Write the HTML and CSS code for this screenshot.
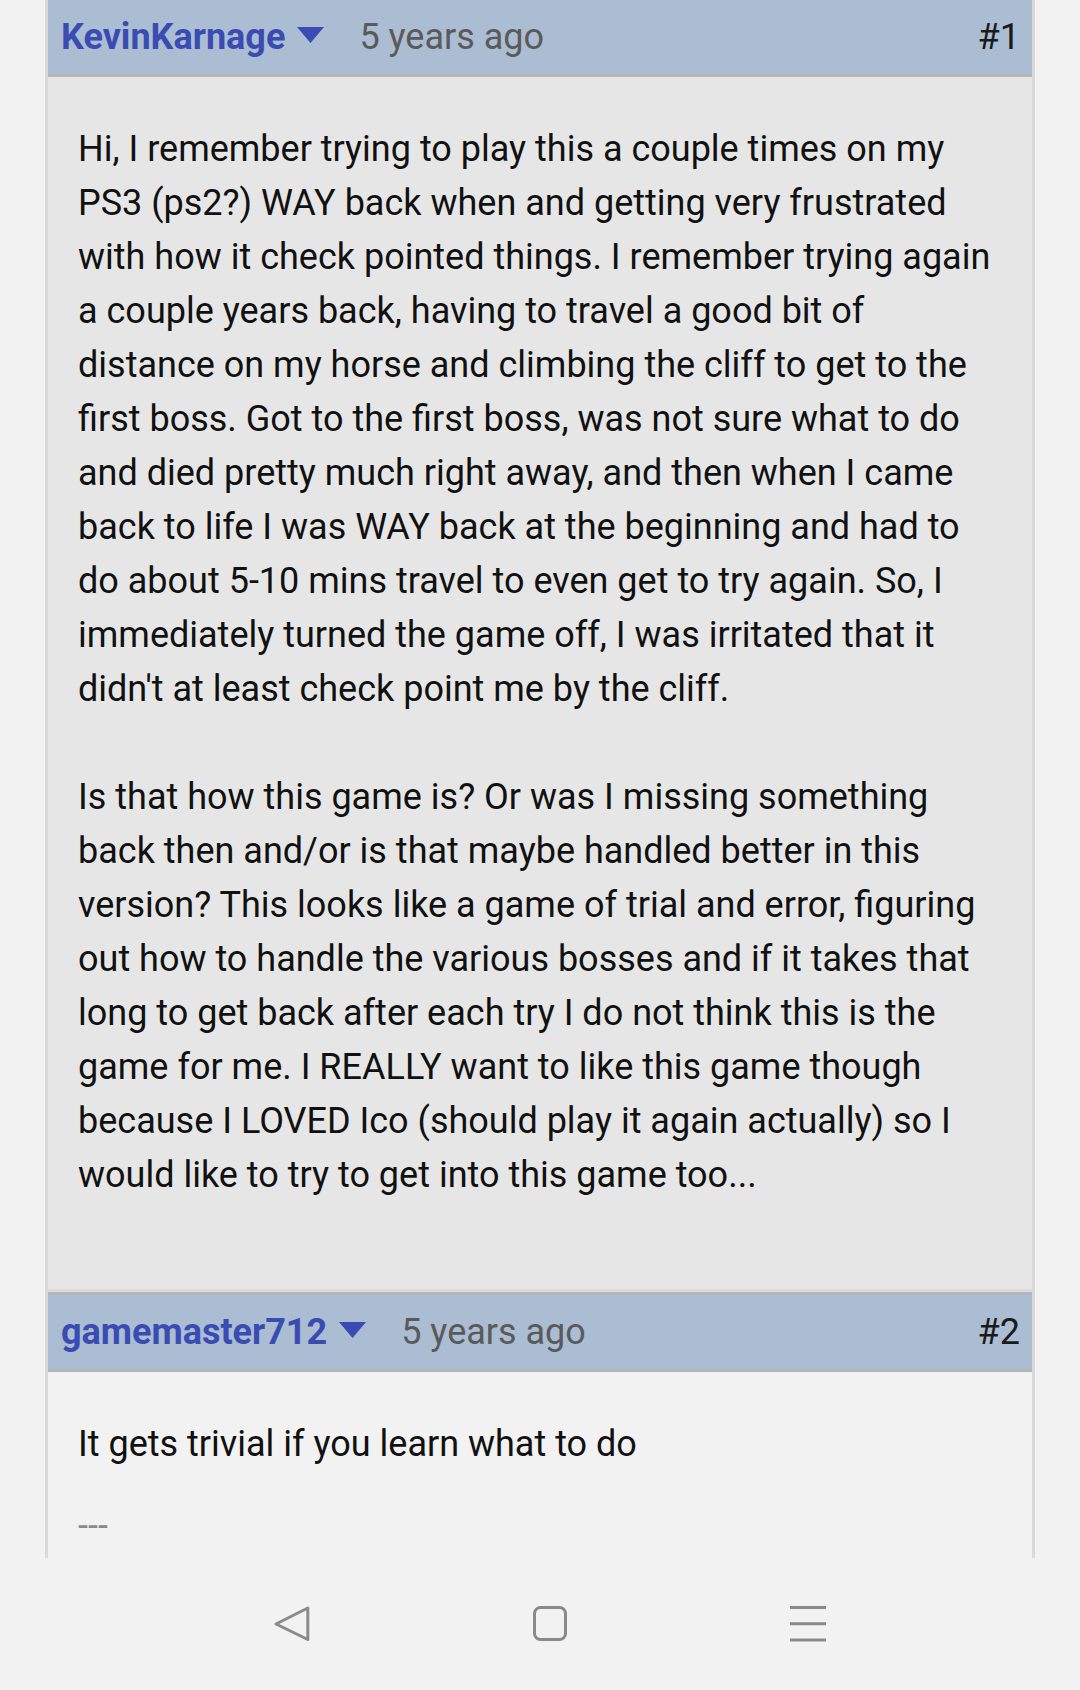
FILE: index.html
```html
<!DOCTYPE html>
<html lang="en">
<head>
    <meta charset="UTF-8">
    <meta name="viewport" content="width=device-width, initial-scale=1.0">
    <title>Comments</title>
    <link rel="stylesheet" href="styles.css">
</head>
<body>

    <div class="thread">
        <div class="post">
            <div class="post-head">
                <a class="author" href="#">KevinKarnage</a>
                <svg class="caret" width="27" height="16" viewBox="0 0 27 16"><polygon points="0,0 27,0 13.5,16" /></svg>
                <span class="age">5 years ago</span>
                <span class="num">#1</span>
            </div>
            <div class="post-body">
                <p>Hi, I remember trying to play this a couple times on my PS3 (ps2?) WAY back when and getting very frustrated with how it check pointed things. I remember trying again a couple years back, having to travel a good bit of distance on my horse and climbing the cliff to get to the first boss. Got to the first boss, was not sure what to do and died pretty much right away, and then when I came back to life I was WAY back at the beginning and had to do about 5-10 mins travel to even get to try again. So, I immediately turned the game off, I was irritated that it didn't at least check point me by the cliff.</p>
                <p>Is that how this game is? Or was I missing something back then and/or is that maybe handled better in this version? This looks like a game of trial and error, figuring out how to handle the various bosses and if it takes that long to get back after each try I do not think this is the game for me. I REALLY want to like this game though because I LOVED Ico (should play it again actually) so I would like to try to get into this game too...</p>
            </div>
        </div>

        <div class="post post-light">
            <div class="post-head">
                <a class="author" href="#">gamemaster712</a>
                <svg class="caret" width="27" height="16" viewBox="0 0 27 16"><polygon points="0,0 27,0 13.5,16" /></svg>
                <span class="age">5 years ago</span>
                <span class="num">#2</span>
            </div>
            <div class="post-body">
                <p>It gets trivial if you learn what to do</p>
                <div class="sig">---</div>
            </div>
        </div>
    </div>

    <!-- system navigation bar -->
    <nav class="navbar">
        <svg width="40" height="40" viewBox="0 0 40 40">
            <polygon points="4,20 35.8,4 35.8,35.5" />
        </svg>
        <svg width="40" height="40" viewBox="0 0 40 40">
            <rect x="4.5" y="3.5" width="31" height="32" rx="6" />
        </svg>
        <svg width="40" height="40" viewBox="0 0 40 40">
            <line x1="2" y1="3.5" x2="38" y2="3.5" />
            <line x1="2" y1="19.8" x2="38" y2="19.8" />
            <line x1="2" y1="36" x2="38" y2="36" />
        </svg>
    </nav>

</body>
</html>
```

FILE: styles.css
```css
body {
    margin: 0;
    background: #f2f2f2;
    font-family: Roboto, "Noto Sans", sans-serif;
    color: #111;
}
.thread {
    margin: -3px 45px 0;
}
.post {
    border: 3px solid #dadada;
    border-top: 0;
    background: #e6e6e6;
}
.post-light {
    background: #f2f2f2;
}
.post-head {
    display: flex;
    align-items: center;
    height: 74px;
    padding: 0 12px 0 13px;
    background: #abbdd3;
    border-top: 3px solid #b5b5b5;
    border-bottom: 3px solid #b5b5b5;
    font-size: 36px;
    line-height: 74px;
}
.author {
    color: #3a4cb1;
    font-weight: bold;
    text-decoration: none;
}
.caret {
    margin: -4px 0 0 12px;
    fill: #3a4cb1;
}
.age {
    margin-left: 35px;
    color: #5a5a5a;
}
.num {
    margin-left: auto;
    color: #1a1a1a;
}
.post-body {
    padding: 45px 30px 87px;
    font-size: 36px;
    line-height: 54px;
}
.post-body p {
    margin: 0;
}
.post-body p + p {
    margin-top: 54px;
}
.sig {
    margin-top: 28px;
    color: #8a8a8a;
}
.navbar {
    position: fixed;
    left: 0;
    right: 0;
    bottom: 0;
    height: 132px;
    background: #f2f2f2;
    display: flex;
    align-items: center;
    justify-content: center;
    gap: 218px;
    padding-left: 20px;
}
.navbar svg {
    fill: none;
    stroke: #8a8a8a;
    stroke-width: 3;
    stroke-linejoin: round;
}
```
